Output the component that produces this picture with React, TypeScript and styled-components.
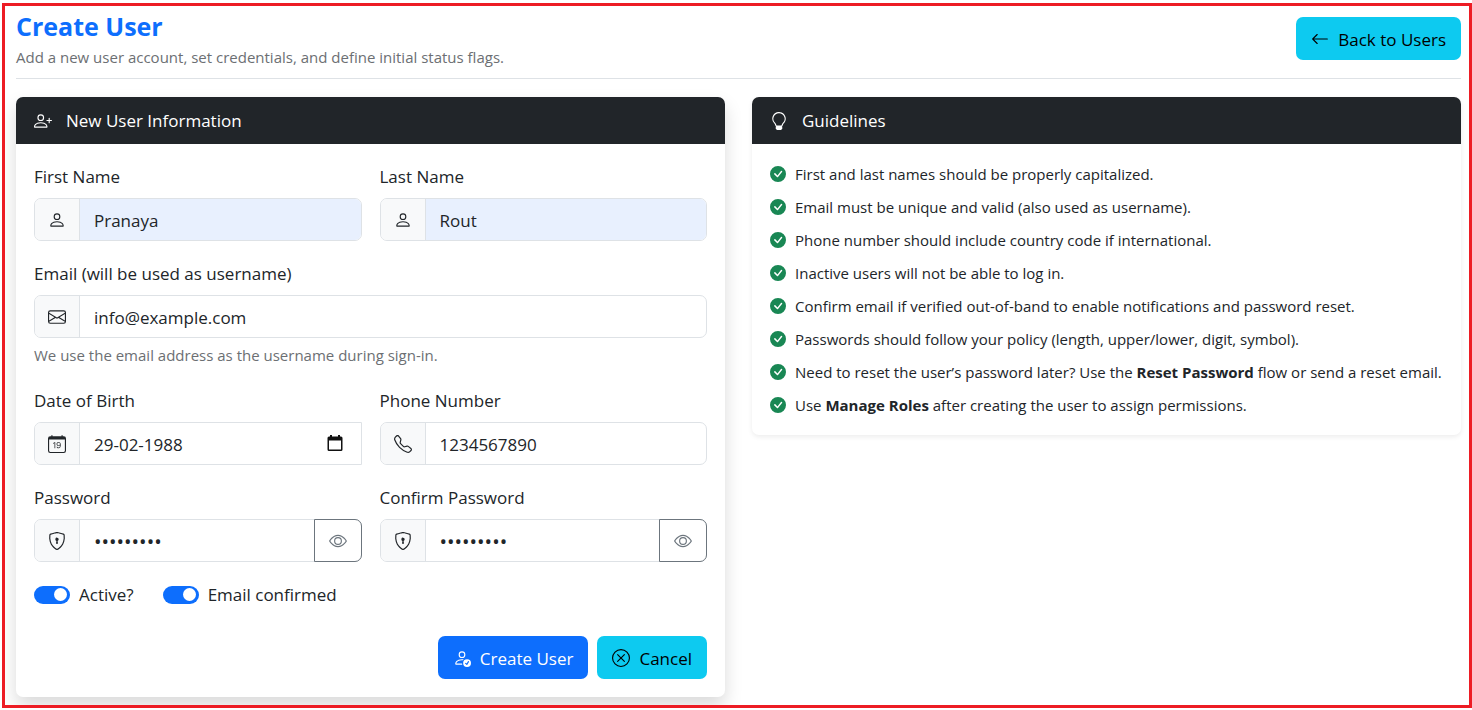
import React, { useState } from "react";
import styled, { createGlobalStyle, css } from "styled-components";
import {
  BsArrowLeft,
  BsCalendarDate,
  BsCheckCircleFill,
  BsEnvelope,
  BsEye,
  BsLightbulb,
  BsPerson,
  BsPersonCheck,
  BsPersonPlus,
  BsShieldLock,
  BsTelephone,
  BsXCircle,
} from "react-icons/bs";

const GlobalStyle = createGlobalStyle`
  *, *::before, *::after { box-sizing: border-box; }
  body {
    margin: 0;
    background: #fff;
    color: #212529;
    font-family: "Segoe UI", "Open Sans", "Noto Sans", sans-serif;
    font-size: 17px;
    line-height: 27px;
  }
  button, input { font: inherit; color: inherit; }
`;

const Frame = styled.main`
  margin: 3px 0 2px 2px;
  padding: 11px 8px 8px 11px;
  border: 3px solid #ed1c24;
  overflow: hidden;
`;

const PageHeader = styled.header`
  display: flex;
  justify-content: space-between;
  align-items: flex-start;
  min-height: 62px;
  margin-bottom: 18px;
  border-bottom: 1px solid #dee2e6;
`;

const Title = styled.h1`
  margin: -7px 0 2px;
  font-size: 25px;
  line-height: 32px;
  font-weight: 700;
  color: #0d6efd;
`;

const Lead = styled.p`
  margin: 0;
  font-size: 15px;
  line-height: 26px;
  color: #6c6f73;
`;

const buttonBase = css`
  display: inline-flex;
  align-items: center;
  gap: 9px;
  height: 43px;
  padding: 1px 15px 0;
  border: 0;
  border-radius: 7px;
  text-decoration: none;
  white-space: nowrap;
  cursor: pointer;

  svg { width: 18px; height: 18px; }
`;

const Button = styled.button<{ $primary?: boolean }>`
  ${buttonBase}
  background: ${(p) => (p.$primary ? "#0d6efd" : "#0dcaf0")};
  color: ${(p) => (p.$primary ? "#fff" : "#000")};
`;

const BackLink = styled.a`
  ${buttonBase}
  background: #0dcaf0;
  color: #000;
`;

const Columns = styled.div`
  display: grid;
  grid-template-columns: 1fr 1fr;
  align-items: start;
  gap: 27px;
`;

const Card = styled.section<{ $raised?: boolean }>`
  border-radius: 7px;
  background: #fff;
  box-shadow: ${(p) =>
    p.$raised ? "0 9px 18px rgba(0,0,0,.15)" : "0 2px 5px rgba(0,0,0,.075)"};
`;

const CardHeader = styled.h2`
  display: flex;
  align-items: center;
  gap: 14px;
  height: 47px;
  margin: 0;
  padding: 0 18px;
  border-radius: 7px 7px 0 0;
  background: #212529;
  color: #fff;
  font-size: 17px;
  font-weight: 400;

  svg { width: 18px; height: 18px; }
`;

const Form = styled.form`
  display: grid;
  grid-template-columns: 1fr 1fr;
  gap: 19px 18px;
  padding: 19px 18px 18px;
`;

const Field = styled.div<{ $wide?: boolean }>`
  min-width: 0;
  grid-column: ${(p) => (p.$wide ? "1 / -1" : "auto")};
`;

const Label = styled.label`
  display: block;
  margin-bottom: 8px;
`;

const InputGroup = styled.div<{ $square?: boolean }>`
  display: flex;
  height: 43px;
  border: 1px solid #dee2e6;
  border-radius: ${(p) => (p.$square ? "7px 0 0 7px" : "7px")};
`;

const Addon = styled.span`
  display: flex;
  flex: none;
  align-items: center;
  justify-content: center;
  width: 45px;
  border-right: 1px solid #dee2e6;
  border-radius: 6px 0 0 6px;
  background: #f8f9fa;

  svg { width: 18px; height: 18px; }
`;

const Input = styled.input<{ $filled?: boolean }>`
  flex: 1;
  min-width: 0;
  padding: 1px 14px 0;
  border: 0;
  border-radius: 0 6px 6px 0;
  outline: 0;
  background: ${(p) => (p.$filled ? "#e8f0fe" : "transparent")};

  &[type="password"] { font-size: 20px; }
`;

const PickerButton = styled.button`
  display: flex;
  align-items: center;
  padding: 0 18px;
  border: 0;
  background: transparent;
  cursor: pointer;
`;

const RevealButton = styled.button`
  display: flex;
  flex: none;
  align-items: center;
  justify-content: center;
  width: 48px;
  margin: -1px;
  padding: 0;
  border: 1px solid #6c757d;
  border-radius: 0 7px 7px 0;
  background: #fff;
  color: #6c757d;
  cursor: pointer;

  svg { width: 18px; height: 18px; }
`;

const Help = styled.p`
  margin: 4px 0 0;
  font-size: 15px;
  line-height: 26px;
  color: #6c6f73;
`;

const Switches = styled.div`
  display: flex;
  grid-column: 1 / -1;
  gap: 29px;
`;

const SwitchLabel = styled.label`
  display: flex;
  align-items: center;
  gap: 9px;
`;

const Switch = styled.input`
  appearance: none;
  display: flex;
  align-items: center;
  width: 36px;
  height: 18px;
  margin: 0;
  padding: 0 3px;
  border-radius: 9px;
  background: #adb5bd;

  &::before {
    content: "";
    width: 13px;
    height: 13px;
    border-radius: 50%;
    background: #fff;
  }
  &:checked {
    justify-content: flex-end;
    background: #0d6efd;
  }
`;

const Actions = styled.div`
  display: flex;
  grid-column: 1 / -1;
  justify-content: flex-end;
  gap: 9px;
  margin-top: 9px;
`;

const Guidelines = styled.ul`
  display: grid;
  gap: 9px;
  margin: 0;
  padding: 18px;
  list-style: none;
  font-size: 15px;
  line-height: 24px;
`;

const Guideline = styled.li`
  display: flex;
  gap: 9px;

  svg {
    flex: none;
    width: 16px;
    height: 16px;
    margin-top: 4px;
    color: #198754;
  }
`;

const PickerIcon = () => (
  <svg width="16" height="18" viewBox="0 0 16 18" aria-hidden="true">
    <path
      fill="#111"
      fillRule="evenodd"
      d="M3 0h2v1.500h6V0h2v1.500h1A1.500 1.500 0 0 1 15.500 3V14.500a1.500 1.500 0 0 1-1.500 1.500H2A1.500 1.500 0 0 1 .5 14.500V3A1.500 1.500 0 0 1 2 1.500h1zM2 5.500V14.500h12V5.500z"
    />
  </svg>
);

interface TextFieldProps {
  id: string;
  label: string;
  icon: React.ReactNode;
  value: string;
  type?: string;
  wide?: boolean;
  filled?: boolean;
  help?: string;
}

function TextField({ id, label, icon, value, type = "text", wide, filled, help }: TextFieldProps) {
  return (
    <Field $wide={wide}>
      <Label htmlFor={id}>{label}</Label>
      <InputGroup>
        <Addon>{icon}</Addon>
        <Input id={id} type={type} defaultValue={value} $filled={filled} />
      </InputGroup>
      {help && <Help>{help}</Help>}
    </Field>
  );
}

function DateField() {
  return (
    <Field>
      <Label htmlFor="dob">Date of Birth</Label>
      <InputGroup $square>
        <Addon><BsCalendarDate /></Addon>
        <Input id="dob" defaultValue="29-02-1988" />
        <PickerButton type="button" aria-label="Open calendar"><PickerIcon /></PickerButton>
      </InputGroup>
    </Field>
  );
}

function PasswordField({ id, label }: { id: string; label: string }) {
  const [shown, setShown] = useState(false);
  return (
    <Field>
      <Label htmlFor={id}>{label}</Label>
      <InputGroup>
        <Addon><BsShieldLock /></Addon>
        <Input id={id} type={shown ? "text" : "password"} defaultValue="Pass@1234" />
        <RevealButton type="button" aria-label="Show password" onClick={() => setShown(!shown)}>
          <BsEye />
        </RevealButton>
      </InputGroup>
    </Field>
  );
}

const guidelines: React.ReactNode[] = [
  "First and last names should be properly capitalized.",
  "Email must be unique and valid (also used as username).",
  "Phone number should include country code if international.",
  "Inactive users will not be able to log in.",
  "Confirm email if verified out-of-band to enable notifications and password reset.",
  "Passwords should follow your policy (length, upper/lower, digit, symbol).",
  <>Need to reset the user’s password later? Use the <strong>Reset Password</strong> flow or send a reset email.</>,
  <>Use <strong>Manage Roles</strong> after creating the user to assign permissions.</>,
];

export default function App() {
  return (
    <>
      <GlobalStyle />
      <Frame>
        <PageHeader>
          <div>
            <Title>Create User</Title>
            <Lead>Add a new user account, set credentials, and define initial status flags.</Lead>
          </div>
          <BackLink href="#users"><BsArrowLeft />Back to Users</BackLink>
        </PageHeader>
        <Columns>
          <Card $raised>
            <CardHeader><BsPersonPlus />New User Information</CardHeader>
            <Form onSubmit={(e) => e.preventDefault()}>
              <TextField id="first" label="First Name" icon={<BsPerson />} value="Pranaya" filled />
              <TextField id="last" label="Last Name" icon={<BsPerson />} value="Rout" filled />
              <TextField
                id="email"
                label="Email (will be used as username)"
                icon={<BsEnvelope />}
                type="email"
                value="info@example.com"
                help="We use the email address as the username during sign-in."
                wide
              />
              <DateField />
              <TextField id="phone" label="Phone Number" icon={<BsTelephone />} type="tel" value="1234567890" />
              <PasswordField id="password" label="Password" />
              <PasswordField id="confirm" label="Confirm Password" />
              <Switches>
                <SwitchLabel><Switch type="checkbox" role="switch" defaultChecked />Active?</SwitchLabel>
                <SwitchLabel><Switch type="checkbox" role="switch" defaultChecked />Email confirmed</SwitchLabel>
              </Switches>
              <Actions>
                <Button type="submit" $primary><BsPersonCheck />Create User</Button>
                <Button type="button"><BsXCircle />Cancel</Button>
              </Actions>
            </Form>
          </Card>
          <Card>
            <CardHeader><BsLightbulb />Guidelines</CardHeader>
            <Guidelines>
              {guidelines.map((text, i) => (
                <Guideline key={i}><BsCheckCircleFill /><span>{text}</span></Guideline>
              ))}
            </Guidelines>
          </Card>
        </Columns>
      </Frame>
    </>
  );
}
